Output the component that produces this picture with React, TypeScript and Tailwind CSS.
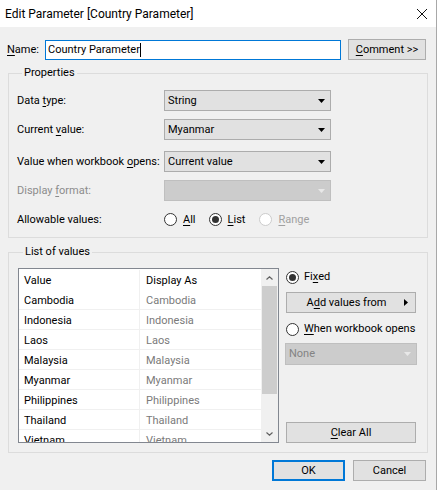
import type { ReactNode } from 'react';

const countries = ['Cambodia', 'Indonesia', 'Laos', 'Malaysia', 'Myanmar', 'Philippines', 'Thailand', 'Vietnam'];

const U = ({ children }: { children: ReactNode }) => (
  <span className="underline underline-offset-[2px] decoration-1">{children}</span>
);

const DownArrow = ({ color }: { color: string }) => (
  <svg width="7" height="4" viewBox="0 0 7 4" className="shrink-0">
    <path d="M0 0H7L3.5 4Z" fill={color} />
  </svg>
);

const Dropdown = ({ value, disabled, className = '' }: { value?: string; disabled?: boolean; className?: string }) => (
  <div
    className={`flex items-center justify-between border pl-[3px] pr-[5px] ${
      disabled ? 'bg-[#cccccc] border-[#bfbfbf] text-[#838383]' : 'bg-[#e1e1e1] border-[#acacac] text-black'
    } ${className}`}
  >
    <span>{value}</span>
    <DownArrow color={disabled ? '#e8e8e8' : '#000000'} />
  </div>
);

const Radio = ({ checked, disabled }: { checked?: boolean; disabled?: boolean }) => (
  <span
    className={`w-[13px] h-[13px] rounded-full border flex items-center justify-center shrink-0 ${
      disabled ? 'border-[#cccccc] bg-white' : 'border-[#333333] bg-white'
    }`}
  >
    {checked && <span className="w-[7px] h-[7px] rounded-full bg-[#333333]" />}
  </span>
);

const Field = ({ label, children, disabled }: { label: ReactNode; children: ReactNode; disabled?: boolean }) => (
  <div className="flex items-center h-[21px]">
    <div className={`w-[147px] whitespace-nowrap ${disabled ? 'text-[#8c8c8c]' : ''}`}>{label}</div>
    {children}
  </div>
);

const Chevron = ({ up }: { up?: boolean }) => (
  <div className="h-[17px] flex items-center justify-center">
    <svg width="7" height="4" viewBox="0 0 7 4">
      <path d={up ? 'M0.5 3.5L3.5 0.8L6.5 3.5' : 'M0.5 0.5L3.5 3.2L6.5 0.5'} stroke="#606060" strokeWidth="1.2" fill="none" />
    </svg>
  </div>
);

export default function App() {
  return (
    <div className="w-[439px] h-[490px] bg-white text-[11px] leading-[16px] text-black [font-family:'Segoe_UI',Roboto,sans-serif]">
      <div className="w-[437px] h-full border-r border-[#a8a8a8] flex flex-col">
        {/* title bar */}
        <div className="h-[27px] bg-white flex items-center justify-between pl-[5px] pr-[9px] shrink-0 text-[12px]">
          <span>Edit Parameter [Country Parameter]</span>
          <svg width="10" height="10" viewBox="0 0 10 10">
            <path d="M0 0L10 10M10 0L0 10" stroke="#111" strokeWidth="1" />
          </svg>
        </div>

        <div className="flex-1 bg-[#f0f0f0] flex flex-col">
          {/* name row */}
          <div className="flex items-start mt-[12px] pl-[7px] h-[21px]">
            <span className="w-[38px] mt-[3px]">
              <U>N</U>ame:
            </span>
            <div className="mt-[1px] w-[296px] h-[20px] bg-white border border-[#0078d7] flex items-center pl-[2px]">
              <span>Country Parameter</span>
              <span className="w-px h-[14px] bg-black" />
            </div>
            <button className="ml-[7px] w-[78px] h-[21px] bg-[#e1e1e1] border border-[#adadad] flex items-center justify-center">
              <span>
                <U>C</U>omment &gt;&gt;
              </span>
            </button>
          </div>

          {/* properties */}
          <fieldset className="mt-[5px] mx-[8px] border border-[#dcdcdc] pl-[8px] pr-[8px] pt-[9px] pb-[7px]">
            <legend className="ml-[5px] px-[2px] leading-[16px]">Properties</legend>
            <div className="flex flex-col">
              <Field
                label={
                  <>
                    Data <U>t</U>ype:
                  </>
                }
              >
                <Dropdown value="String" className="w-[167px] h-[21px]" />
              </Field>
              <div className="mt-[8px]">
                <Field
                  label={
                    <>
                      Current <U>v</U>alue:
                    </>
                  }
                >
                  <Dropdown value="Myanmar" className="w-[167px] h-[21px]" />
                </Field>
              </div>
              <div className="mt-[11px]">
                <Field
                  label={
                    <>
                      Value when workbook <U>o</U>pens:
                    </>
                  }
                >
                  <Dropdown value="Current value" className="w-[167px] h-[21px]" />
                </Field>
              </div>
              <div className="mt-[8px]">
                <Field
                  disabled
                  label={
                    <>
                      Display <U>f</U>ormat:
                    </>
                  }
                >
                  <Dropdown disabled className="w-[167px] h-[21px]" />
                </Field>
              </div>
              <div className="mt-[8px]">
                <Field label="Allowable values:">
                  <div className="flex items-center">
                    <Radio />
                    <span className="ml-[6px]">
                      <U>A</U>ll
                    </span>
                    <span className="ml-[13px]">
                      <Radio checked />
                    </span>
                    <span className="ml-[6px]">
                      <U>L</U>ist
                    </span>
                    <span className="ml-[14px]">
                      <Radio disabled />
                    </span>
                    <span className="ml-[6px] text-[#a0a0a0]">
                      <U>R</U>ange
                    </span>
                  </div>
                </Field>
              </div>
            </div>
          </fieldset>

          {/* list of values */}
          <fieldset className="mt-[6px] mx-[8px] border border-[#dcdcdc] pl-[9px] pr-[9px] pt-[8px] pb-[9px]">
            <legend className="ml-[5px] px-[2px] leading-[16px]">List of values</legend>
            <div className="flex">
              <div className="w-[261px] h-[175px] border border-[#828790] bg-white flex overflow-hidden">
                <div className="flex-1 overflow-hidden pt-[1px]">
                  <div className="flex h-[20px]">
                    <div className="w-[121px] h-full pl-[5px] pt-[3px] border-r border-[#f0f0f0]">Value</div>
                    <div className="pl-[6px] pt-[3px]">Display As</div>
                  </div>
                  {countries.map((c) => (
                    <div key={c} className="flex h-[20px] border-b border-[#f0f0f0]">
                      <div className="w-[121px] h-full pl-[5px] pt-[3px] border-r border-[#f0f0f0]">{c}</div>
                      <div className="pl-[6px] pt-[3px] text-[#7a7a7a]">{c}</div>
                    </div>
                  ))}
                </div>
                <div className="w-[17px] bg-[#f0f0f0] flex flex-col">
                  <Chevron up />
                  <div className="mx-[1px] h-[108px] bg-[#cdcdcd]" />
                  <div className="flex-1" />
                  <Chevron />
                </div>
              </div>

              <div className="ml-[7px] w-[130px] h-[175px] flex flex-col">
                <div className="h-[18px] flex items-center">
                  <Radio checked />
                  <span className="ml-[5px]">
                    Fi<U>x</U>ed
                  </span>
                </div>
                <button className="mt-[6px] h-[21px] bg-[#e1e1e1] border border-[#adadad] flex items-center">
                  <span className="flex-1 text-center pl-[2px]">
                    A<U>d</U>d values from
                  </span>
                  <svg width="4" height="7" viewBox="0 0 4 7" className="mr-[7px]">
                    <path d="M0 0L4 3.5L0 7Z" fill="#000" />
                  </svg>
                </button>
                <div className="mt-[7px] h-[18px] flex items-center whitespace-nowrap">
                  <Radio />
                  <span className="ml-[5px]">
                    <U>W</U>hen workbook opens
                  </span>
                </div>
                <Dropdown disabled value="None" className="mt-[5px] -ml-[1px] w-[132px] h-[22px]" />
                <div className="flex-1" />
                <button className="h-[21px] bg-[#e1e1e1] border border-[#adadad] flex items-center justify-center">
                  <span>
                    <U>C</U>lear All
                  </span>
                </button>
              </div>
            </div>
          </fieldset>

          {/* footer */}
          <div className="flex justify-end gap-[8px] pr-[10px] mt-[7px]">
            <button className="w-[73px] h-[21px] bg-[#e1e1e1] border-2 border-[#0078d7] flex items-center justify-center">
              OK
            </button>
            <button className="w-[73px] h-[21px] bg-[#e1e1e1] border border-[#adadad] flex items-center justify-center">
              Cancel
            </button>
          </div>
        </div>
      </div>
    </div>
  );
}
